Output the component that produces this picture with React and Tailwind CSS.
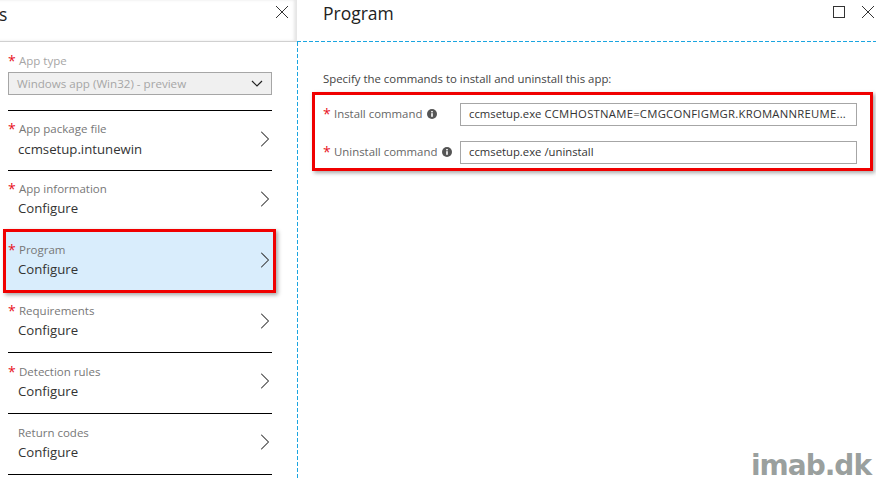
import { ChevronRight } from 'lucide-react';

const rows = [
  { label: 'App package file', value: 'ccmsetup.intunewin', required: true, rowClass: 'h-[60px] pt-[10px]', valueClass: 'mt-[2px]' },
  { label: 'App information', value: 'Configure', required: true, rowClass: 'h-[61px] pt-[10px]', valueClass: 'mt-[1px]' },
  { label: 'Program', value: 'Configure', required: true, active: true, rowClass: 'h-[61px] pt-[10px]', valueClass: 'mt-[1px]' },
  { label: 'Requirements', value: 'Configure', required: true, rowClass: 'h-[60px] pt-[10px]', valueClass: 'mt-[1px]' },
  { label: 'Detection rules', value: 'Configure', required: true, rowClass: 'h-[61px] pt-[11px]', valueClass: 'mt-[1px]' },
  { label: 'Return codes', value: 'Configure', required: false, rowClass: 'h-[61px] pt-[11px]', valueClass: 'mt-[1px]' },
];

function Star({ className = '' }) {
  return <span className={`absolute text-[#e81123] text-[14px] leading-none ${className}`}>*</span>;
}

function Close() {
  return (
    <svg width="14" height="14" viewBox="0 0 14 14" fill="none" stroke="#333" strokeWidth="1">
      <path d="M1 1l12 12M13 1L1 13" />
    </svg>
  );
}

function Row({ row }) {
  return (
    <div className={`relative shrink-0 ml-2 w-[264px] ${row.rowClass} ${row.active ? '' : 'border-b border-black'}`}>
      {row.active && (
        <div className="absolute left-[-5px] right-[-4px] top-[-3px] bottom-0 bg-[#d9edfc] border-[3px] border-[#f00000] shadow-[2px_2px_4px_rgba(0,0,0,0.35)]" />
      )}
      <div className="relative pl-[11px]">
        {row.required && <Star className="left-0 top-[1px]" />}
        <div className={`text-[11.5px] leading-[16px] text-[#777] ${row.required ? '' : '-ml-[1px]'}`}>{row.label}</div>
        <div className={`-ml-[1px] text-[13.2px] leading-[20px] text-[#333] ${row.valueClass}`}>{row.value}</div>
      </div>
      <ChevronRight size={28} strokeWidth={0.9} color="#333" className="absolute right-[-7px] top-[14px]" />
    </div>
  );
}

function Field({ label, value }) {
  return (
    <div className="flex items-center h-[23px]">
      <div className="relative flex items-center w-[137px] pl-[11px] -mt-[2px] text-[11.4px] text-[#666]">
        <Star className="left-0 top-[2px]" />
        <span>{label}</span>
        <svg width="10" height="10" viewBox="0 0 10 10" className="ml-[5px] mt-[1px]">
          <circle cx="5" cy="5" r="5" fill="#555" />
          <rect x="4.2" y="4.2" width="1.6" height="3.6" fill="#fff" />
          <rect x="4.2" y="2" width="1.6" height="1.4" fill="#fff" />
        </svg>
      </div>
      <div className="w-[397px] h-full border border-[#a6a6a6] bg-white px-2 flex items-center text-[11.3px] text-[#333] whitespace-nowrap">
        {value}
      </div>
    </div>
  );
}

export default function App() {
  return (
    <div className="relative flex w-[876px] h-[479px] overflow-hidden bg-white font-['Open_Sans',sans-serif]">
      <div className="w-[297px] shrink-0 flex flex-col">
        <div className="h-[42px] shrink-0 border-b border-[#d0d0d0] flex justify-between pr-[8px] shadow-[inset_-3px_0_3px_rgba(0,0,0,0.1)]">
          <span className="text-[17.5px] leading-[28px] text-[#222] -ml-[1px]">s</span>
          <div className="pt-[5px]"><Close /></div>
        </div>
        <div className="ml-2 w-[264px] h-[69px] shrink-0 border-b border-black relative pt-[11px]">
          <Star className="left-0 top-[12px]" />
          <div className="pl-[11px] text-[11.5px] leading-[16px] text-[#a6a6a6]">App type</div>
          <div className="mt-[3px] h-[23px] bg-[#f0f0f0] border border-[#a6a6a6] flex items-center justify-between pl-2 pr-[8px] text-[11.6px] text-[#a6a6a6]">
            <span>Windows app (Win32) - preview</span>
            <svg width="12" height="7" viewBox="0 0 12 7" fill="none" stroke="#222" strokeWidth="1.2"><path d="M1 1l5 5 5-5" /></svg>
          </div>
        </div>
        {rows.map(r => <Row key={r.label} row={r} />)}
      </div>
      <div className="flex-1 flex flex-col">
        <div className="h-[41px] shrink-0 flex justify-between pl-[26px] pr-[1px]">
          <span className="text-[17.5px] leading-[26px] text-[#222]">Program</span>
          <div className="flex gap-[16px] pt-[5px]">
            <div className="w-[12px] h-[12px] border border-[#333] mt-[1px]" />
            <Close />
          </div>
        </div>
        <div className="h-px shrink-0 bg-[repeating-linear-gradient(90deg,#1ba5e0_0_4px,transparent_4px_6px)]" />
        <div className="flex-1 flex">
          <div className="w-px shrink-0 bg-[repeating-linear-gradient(180deg,#1ba5e0_0_4px,transparent_4px_6px)]" />
          <div className="flex-1 flex flex-col pl-[25px]">
            <div className="pt-[29px] text-[11.4px] leading-[16px] text-[#444]">Specify the commands to install and uninstall this app:</div>
            <div className="relative mt-[16px] flex flex-col gap-[15px] w-[534px]">
              <div className="absolute left-[-11px] right-[-16px] top-[-11px] bottom-[-7px] border-[3px] border-[#f00000] shadow-[2px_2px_4px_rgba(0,0,0,0.35)]" />
              <Field label="Install command" value={<span>ccmsetup.exe <span className="tracking-[0.25px]">CCMHOSTNAME=CMGCONFIGMGR.KROMANNREUME...</span></span>} />
              <Field label="Uninstall command" value="ccmsetup.exe /uninstall" />
            </div>
          </div>
        </div>
      </div>
      <div className="absolute right-[5px] bottom-0 font-['DejaVu_Sans',sans-serif] font-bold text-[#9aa09e] text-[28px] leading-[26px] tracking-[-1px]">imab.dk</div>
    </div>
  );
}
